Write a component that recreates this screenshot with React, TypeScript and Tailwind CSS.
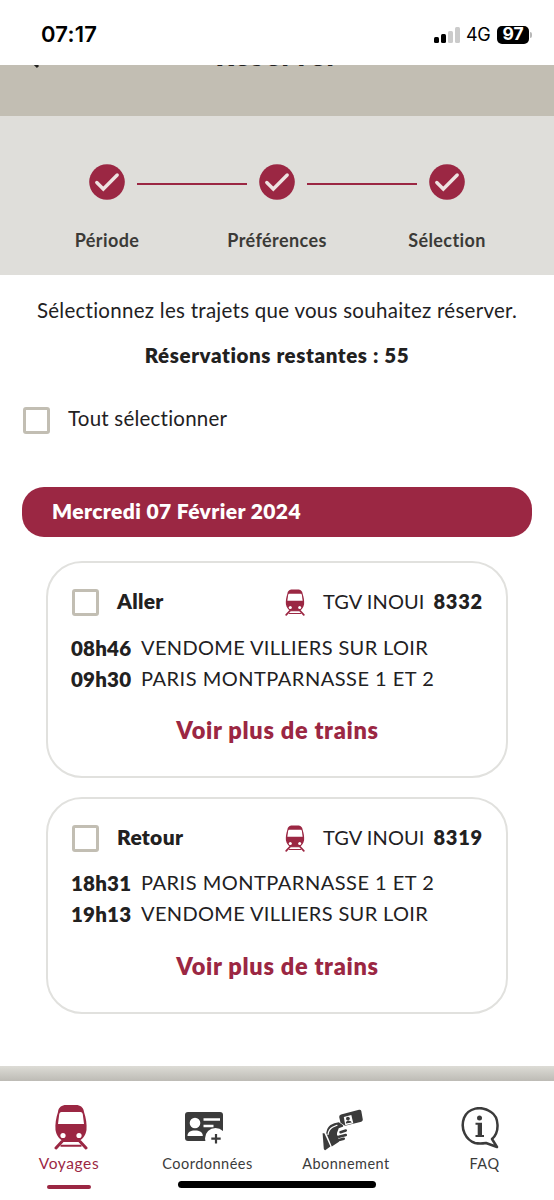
import React from "react";

function TrainIcon({ className }: { className: string }) {
  return (
    <svg viewBox="0 0 34 46" className={className} fill="none">
      <path d="M10.500 1h13c4 1 6 3 6.500 7C32 14 33 20 32.500 26c-1 6-4 9-7.500 11H9c-3.500-2-6.500-5-7.500-11C1 20 2 14 4 8c.5-4 2.500-6 6.500-7z" fill="#9b2743" />
      <path d="M7.500 8h19c1.500 0 2 1 2.300 2.500L30 20H4l1.200-9.500C5.500 9 6 8 7.500 8z" fill="#fff" />
      <circle cx="9" cy="31.500" r="2.600" fill="#fff" />
      <circle cx="25" cy="31.500" r="2.600" fill="#fff" />
      <path d="M8 37.500 2 44M26 37.500l6 6.500" stroke="#9b2743" strokeWidth="3" strokeLinecap="round" />
      <path d="M8 37h18M6.500 41.700h21" stroke="#9b2743" strokeWidth="2" />
    </svg>
  );
}

function Step({ label }: { label: string }) {
  return (
    <div className="flex w-[60px] flex-col items-center">
      <svg viewBox="0 0 36 36" className="h-9 w-9 shrink-0" fill="none">
        <circle cx="18" cy="18" r="17.800" fill="#9b2743" />
        <path d="m7.800 18.500 6.500 6.500L28.200 11" stroke="#eee3e1" strokeWidth="3.400" strokeLinecap="round" />
      </svg>
      <span className="mt-[30px] text-[18px] leading-5 font-bold tracking-[0.400px] whitespace-nowrap text-[#3b3a37]">{label}</span>
    </div>
  );
}

function Checkbox() {
  return <span className="h-[27px] w-[27px] shrink-0 rounded-[3px] border-[3px] border-[#c2beb3] bg-white" />;
}

type Stop = { time: string; name: string; tracking: string };

function Trip({ title, train, stops }: { title: string; train: string; stops: Stop[] }) {
  return (
    <section className="mx-[46px] h-[217px] rounded-[36px] border-2 border-[#e1e1de] pt-[25px] pr-[23px] pl-6">
      <div className="flex h-[29px] items-center">
        <Checkbox />
        <h3 className="ml-[18px] flex-1 pb-[3px] text-[21px] leading-7 font-extrabold tracking-[0.300px]">{title}</h3>
        <TrainIcon className="h-[27px] w-5" />
        <p className="ml-[18px] flex w-[160px] gap-[9px] pb-[3px] text-[20px] leading-7 whitespace-nowrap">
          <span className="tracking-[0.100px]">TGV INOUI</span>
          <b className="font-extrabold tracking-[0.700px]">{train}</b>
        </p>
      </div>
      <div className="-ml-px mt-[14px]">
        {stops.map((s) => (
          <div key={s.time} className="flex h-[31px] items-center whitespace-nowrap">
            <b className="w-[70px] pt-[3px] text-[20.500px] font-extrabold tracking-[0.200px]">{s.time}</b>
            <span className={`text-[20px] ${s.tracking}`}>{s.name}</span>
          </div>
        ))}
      </div>
      <button className="mt-[21px] block w-full text-center text-[23.500px] leading-8 font-extrabold tracking-[0.700px] text-[#9b2743]">
        Voir plus de trains
      </button>
    </section>
  );
}

const vendome = { name: "VENDOME VILLIERS SUR LOIR", tracking: "tracking-[0.350px]" };
const paris = { name: "PARIS MONTPARNASSE 1 ET 2", tracking: "tracking-[0.500px]" };

export default function App() {
  return (
    <div className="flex h-[1200px] w-[554px] flex-col overflow-hidden bg-white font-['Lato','Open_Sans',sans-serif] text-[#22211f]">
      <header className="flex h-[65px] shrink-0 items-center justify-between pt-1 pr-[22px] pl-[41px] font-['Inter',sans-serif] text-black">
        <span className="text-[22px] font-semibold tracking-[0.200px]">07:17</span>
        <div className="flex items-center">
          <div className="flex h-4 items-end gap-[2px]">
            <i className="h-[6px] w-[5px] rounded-[1.500px] bg-black" />
            <i className="h-[9px] w-[5px] rounded-[1.500px] bg-black" />
            <i className="h-3 w-[5px] rounded-[1.500px] bg-[#cbcbcb]" />
            <i className="h-4 w-[5px] rounded-[1.500px] bg-[#cbcbcb]" />
          </div>
          <span className="ml-[6px] w-[31px] text-[18px] tracking-[-0.300px]">4G</span>
          <span className="flex h-[18px] w-8 items-center justify-center rounded-[5px] bg-black text-[17.500px] font-bold text-white">97</span>
          <i className="ml-[1px] h-[6px] w-[2px] rounded-r-full bg-[#b8b8b8]" />
        </div>
      </header>

      <div className="relative h-[51px] shrink-0 overflow-hidden bg-[#c2beb3]">
        <h1 className="absolute -top-[27px] left-0 w-full text-center text-[28px] leading-[34px] font-extrabold tracking-[1.500px]">Réserver</h1>
        <svg viewBox="0 0 12 20" className="absolute -top-[16px] left-7 h-5 w-3" fill="none">
          <path d="M10 2 2 10l8 8" stroke="#22211f" strokeWidth="3" />
        </svg>
      </div>

      <nav className="flex h-[159px] shrink-0 justify-center bg-[#dfdeda] pt-12">
        <Step label="Période" />
        <i className="mt-[19px] h-[1.500px] w-[110px] bg-[#9b2743]" />
        <Step label="Préférences" />
        <i className="mt-[19px] h-[1.500px] w-[110px] bg-[#9b2743]" />
        <Step label="Sélection" />
      </nav>

      <main className="h-[791px] shrink-0">
        <p className="pt-[21px] text-center text-[20.500px] leading-7 tracking-[0.270px] whitespace-nowrap">
          Sélectionnez les trajets que vous souhaitez réserver.
        </p>
        <p className="mt-[17px] text-center text-[20.500px] leading-7 font-extrabold tracking-[0.600px]">Réservations restantes : 55</p>
        <label className="mt-9 ml-[23px] flex h-[30px] items-center">
          <Checkbox />
          <span className="ml-[18px] pb-1 text-[20.500px] leading-7 tracking-[0.220px]">Tout sélectionner</span>
        </label>
        <h2 className="mx-[22px] mt-[52px] mb-6 h-[50px] rounded-[22px] bg-[#9b2743] pl-[30px] text-[21px] leading-[47px] font-extrabold tracking-[0.400px] text-white">
          Mercredi 07 Février 2024
        </h2>
        <Trip title="Aller" train="8332" stops={[{ time: "08h46", ...vendome }, { time: "09h30", ...paris }]} />
        <div className="h-[18.500px]" />
        <Trip title="Retour" train="8319" stops={[{ time: "18h31", ...paris }, { time: "19h13", ...vendome }]} />
      </main>

      <div className="h-[15px] shrink-0 bg-linear-to-b from-[#dddcd6] to-[#bdbbb5]" />

      <footer className="relative flex h-[119px] shrink-0 bg-white text-[14.500px] tracking-[0.480px] text-[#3b3b3b]">
        <a className="flex w-[138px] flex-col items-center pt-[23px] text-[#9b2743]">
          <TrainIcon className="ml-1 h-[46px] w-[34px]" />
          <span className="mt-[3px] text-[15.500px] leading-5 tracking-[0.600px]">Voyages</span>
          <i className="mt-3 h-1 w-11 rounded-full bg-[#9b2743]" />
        </a>
        <a className="flex w-[139px] flex-col items-center pt-7">
          <svg viewBox="0 0 40 36" className="-ml-2 h-9 w-10" fill="none">
            <rect x="1" y="3" width="38" height="29" rx="3" fill="#3b3b3b" />
            <circle cx="11" cy="14" r="5.300" fill="#fff" />
            <path d="M3.500 27c0-4 3-5.500 7.500-5.500s7.800 1.500 7.800 5.500z" fill="#fff" />
            <path d="M19.500 10.500h16.500M19.500 17h10" stroke="#fff" strokeWidth="2.600" />
            <circle cx="31.500" cy="29.500" r="10.500" fill="#fff" />
            <path d="M32 25v9.500M27.300 29.700h9.400" stroke="#3b3b3b" strokeWidth="2.200" />
          </svg>
          <span className="mt-[9px] leading-5">Coordonnées</span>
        </a>
        <a className="flex w-[138px] flex-col items-center pt-7">
          <svg viewBox="0 0 42 42" className="-ml-2 h-[42px] w-[42px]" fill="none">
            <path d="m20 5.500 18-4.800q1.800-.3 2.300 1.300l1.500 8.500q.2 1.600-1.500 2.200L24 16.800l-4.500-3L18.200 8q-.2-2 1.800-2.500z" fill="#3b3b3b" />
            <path d="m22.800 8 7.500-2 2 8.200-8 2z" fill="#fff" />
            <circle cx="26.900" cy="9.600" r="1.900" fill="#3b3b3b" />
            <path d="m24.800 14.600.3-1.900 2-1.200 2.800.7.800 1.400z" fill="#3b3b3b" />
            <path d="m1.600 24.200 1.800 0 6 13.300-4.800 3.600q-1.400.4-1.800-1.300z" fill="#3b3b3b" />
            <path d="M5.200 24q.8-5.500 4.300-8 3.500-2.300 8.300-2.800l3.700 2.500q1.800 1.600-.5 2.300l-3.300 1.200-1.700 4.800q-.5 2.300 1 3l1 5.800-7.200 4.800z" fill="#3b3b3b" />
            <path d="M19.500 23.200l5.300-1.700M18 27.800l6.800-1.800M17 31.300l5.800-1.600" stroke="#3b3b3b" strokeWidth="2.500" strokeLinecap="round" />
            <path d="M7 25.500q.7-5 4.500-7.200l4.500-2" stroke="#fff" strokeWidth="1.200" strokeLinecap="round" />
          </svg>
          <span className="mt-[3px] leading-5">Abonnement</span>
        </a>
        <a className="flex w-[139px] flex-col items-center pt-[26px]">
          <svg viewBox="0 0 38 42" className="-ml-[9px] h-[42px] w-[38px]" fill="none">
            <path d="M31 32C39 25 38 10 30 5 20-2 7 1 3 11-1 22 5 33 14 36q5 1 11 0l11 4z" stroke="#3b3b3b" strokeWidth="2.500" strokeLinejoin="round" />
            <circle cx="18.500" cy="11" r="2.500" fill="#3b3b3b" />
            <path d="M14.500 15.800h6.500v12.200h2v2h-8.500v-2h2.200V17.800h-2.200z" fill="#3b3b3b" />
          </svg>
          <span className="mt-[5px] leading-5">FAQ</span>
        </a>
        <i className="absolute top-[100px] left-[178px] h-[7px] w-[198px] rounded-full bg-black" />
      </footer>
    </div>
  );
}
